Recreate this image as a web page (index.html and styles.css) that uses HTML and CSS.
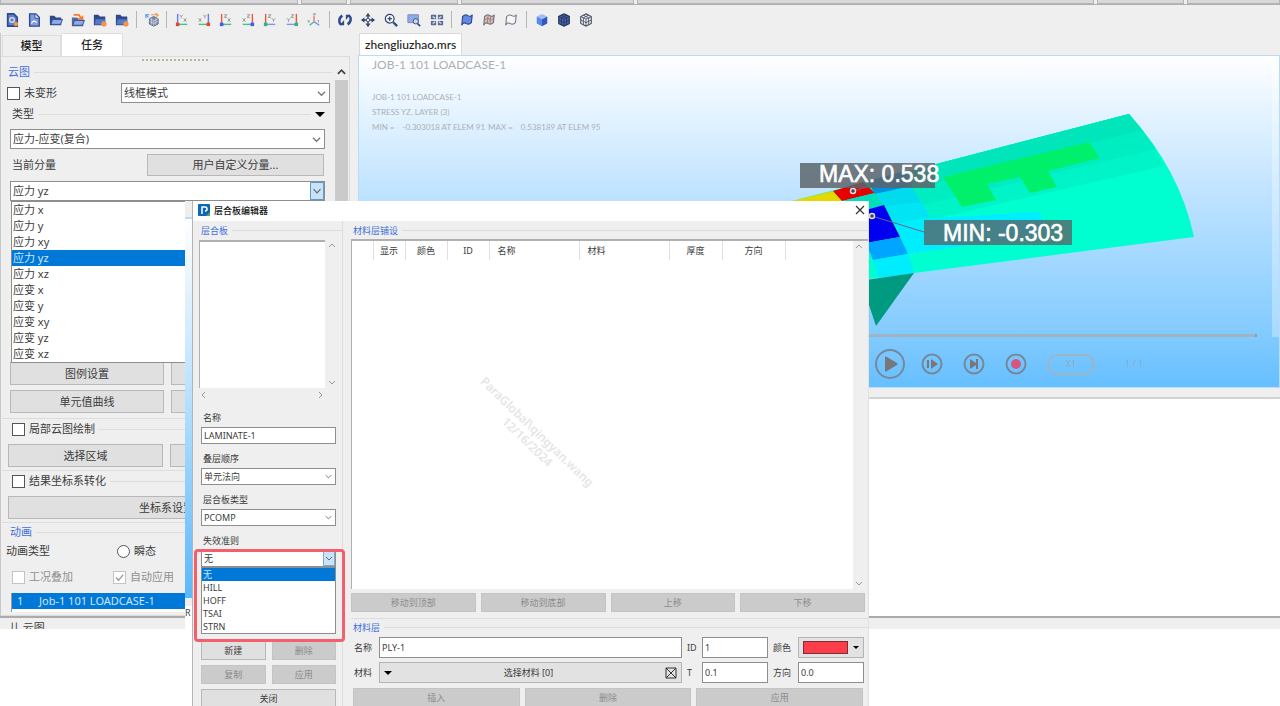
FILE: index.html
```html
<!DOCTYPE html>
<html lang="zh-CN">
<head>
<meta charset="utf-8">
<title>层合板编辑器</title>
<link rel="stylesheet" href="styles.css">
</head>
<body>
<svg class="defs" aria-hidden="true">
  <symbol id="i-doc" viewBox="0 0 16 16"><path d="M3 1h7l4 4v10H3z" fill="#7f9ce6" stroke="#2d4a8c" stroke-width="1.6"/><path d="M9 1v5h5" fill="#dce6fb" stroke="#2d4a8c"/><path d="M5 12q3-5 6-1" stroke="#fff" fill="none" stroke-width="1.5"/></symbol>
  <symbol id="i-docnew" viewBox="0 0 16 16"><path d="M3 1h7l4 4v10H3z" fill="#5f7fc4" stroke="#2d4a8c" stroke-width="1.8"/><circle cx="8" cy="8" r="2.6" fill="none" stroke="#dfe8fb" stroke-width="1.4"/><circle cx="12.500" cy="12.500" r="2.500" fill="#f0964c"/></symbol>
  <symbol id="i-folder" viewBox="0 0 16 16"><path d="M1 3h5l2 2h6v9H1z" fill="#2d4a8c"/><path d="M4 7.500h11.500L13 13H2z" fill="#8fabec" stroke="#2d4a8c"/></symbol>
  <symbol id="i-folderup" viewBox="0 0 16 16"><path d="M1 5h5l2 1h6v9H1z" fill="#5a6a98"/><path d="M4 8.500h11.500L13 14H2z" fill="#8fabec" stroke="#2d4a8c"/><path d="M3 2h6l3 5M8 7h5V3" fill="none" stroke="#ee7f33" stroke-width="2"/></symbol>
  <symbol id="i-foldernew" viewBox="0 0 16 16"><path d="M1 2h5l2 2h6v10H1z" fill="#2d4a8c"/><path d="M3 7h11v6H2z" fill="#5879c4"/><circle cx="12.500" cy="12.500" r="3" fill="#f0964c"/></symbol>
  <symbol id="i-mesh" viewBox="0 0 16 16"><path d="M10 4l5 2.500v6L10 15l-5-2.500v-6z" fill="#7d89a8" stroke="#56617f"/><path d="M5 6.500l5 2.500 5-2.500M10 9v6M5 9.500l5 2.500 5-2.500M7.500 5.500v8M12.500 5.500v8" fill="none" stroke="#dfe3ee" stroke-width=".7"/><path d="M1 6V2h4M1 2l3 3" fill="none" stroke="#4f8ff0" stroke-width="1.200"/><path d="M7 2h7M12 0l3 2.500L13 4" fill="none" stroke="#f09a4c" stroke-width="1.300"/></symbol>
  <symbol id="i-rot" viewBox="0 0 16 16"><path d="M5 3C0 6 1 12 4 13M11 13c5-3 4-9 1-10" fill="none" stroke="#2d4a8c" stroke-width="2.800"/><path d="M2 14h5V8zM14 2H9v6z" fill="#2d4a8c"/></symbol>
  <symbol id="i-move" viewBox="0 0 16 16"><path d="M8 1v14M1 8h14" stroke="#33456f" stroke-width="1.500"/><path d="M8 0l3 4H5zM8 16l3-4H5zM0 8l4-3v6zM16 8l-4-3v6z" fill="#33456f"/><circle cx="8" cy="8" r="2" fill="#efefef" stroke="#33456f"/></symbol>
  <symbol id="i-zoom" viewBox="0 0 16 16"><circle cx="6.500" cy="6.500" r="5" fill="#f4f6fb" stroke="#33456f" stroke-width="1.400"/><path d="M4 6.500h5M6.500 4v5" stroke="#33456f" stroke-width="1.400"/><path d="M10.500 10.500L15 15" stroke="#2d4a8c" stroke-width="2.600"/></symbol>
  <symbol id="i-zoombox" viewBox="0 0 16 16"><path d="M1 2h12v9H1z" fill="#8fabec" stroke="#7685a8"/><circle cx="10" cy="9.500" r="3" fill="#c9d6f6" stroke="#33456f"/><path d="M12 12l3 3" stroke="#2d4a8c" stroke-width="2"/></symbol>
  <symbol id="i-fit" viewBox="0 0 16 16"><path d="M1 2h6v5H1zM9 2h6v5H9zM1 9h6v5H1zM9 9h6v5H9z" fill="#5b6b94"/><path d="M3 4l3 2M13 4l-3 2M3 12l3-2M13 12l-3-2" stroke="#e4e8f2" stroke-width="1.300"/></symbol>
  <symbol id="i-flag" viewBox="0 0 16 16"><path d="M3 4q3-3 6-1t5-1l-1 9q-3 3-6 1t-5 2z" fill="#6488e6" stroke="#2d4a8c" stroke-width="1.300"/></symbol>
  <symbol id="i-flagc" viewBox="0 0 16 16"><path d="M3 4q3-3 6-1t5-1l-1 9q-3 3-6 1t-5 2z" fill="#eeb79a" stroke="#6f7488" stroke-width="1.300"/><path d="M3 8q3-3 5.500-1t5-1M7 3l-1 9M10 3L9 12" stroke="#7580a6" fill="none"/></symbol>
  <symbol id="i-flago" viewBox="0 0 16 16"><path d="M3 4q3-3 6-1t5-1l-1 9q-3 3-6 1t-5 2z" fill="#f6f6f6" stroke="#70778a" stroke-width="1.200"/></symbol>
  <symbol id="i-cube" viewBox="0 0 16 16"><path d="M8 1l6 3-6 3-6-3z" fill="#a4bcf6"/><path d="M2 4l6 3v8l-6-3z" fill="#5b84ee"/><path d="M14 4L8 7v8l6-3z" fill="#3159b8"/></symbol>
  <symbol id="i-cubem" viewBox="0 0 16 16"><path d="M8 1l6 3v8l-6 3-6-3V4z" fill="#4c69b0" stroke="#26345e" stroke-width="1.400"/><path d="M2 4l6 3 6-3M8 7v8M2 8l6 3 6-3M5 2.500l6 3v8M11 2.500l-6 3v8" fill="none" stroke="#26345e"/></symbol>
  <symbol id="i-cubew" viewBox="0 0 16 16"><path d="M8 1l6 3v8l-6 3-6-3V4z" fill="#f1f1f1" stroke="#4a5268" stroke-width="1.300"/><path d="M2 4l6 3 6-3M8 7v8M2 8l6 3 6-3M5 2.500l6 3v8M11 2.500l-6 3v8" fill="none" stroke="#4a5268"/></symbol>
</svg>

<div class="app">
  <div class="dockbar"><span class="dock d1"></span><span class="dock d2"></span><span class="dock d3"></span><span class="dock d4"></span><span class="dock d5"></span><span class="dock d6"></span><span class="dock d7"></span></div>

  <div class="toolbar" role="toolbar" aria-label="工具栏">
    <div class="tools">
      <button class="tool" aria-label="新建"><svg><use href="#i-docnew"/></svg></button>
      <button class="tool" aria-label="文件"><svg><use href="#i-doc"/></svg></button>
      <button class="tool" aria-label="打开"><svg><use href="#i-folder"/></svg></button>
      <button class="tool" aria-label="导入"><svg><use href="#i-folderup"/></svg></button>
      <button class="tool" aria-label="保存"><svg><use href="#i-foldernew"/></svg></button>
      <button class="tool" aria-label="另存为"><svg><use href="#i-foldernew"/></svg></button>
    </div>
    <span class="sep"></span>
    <div class="tools"><button class="tool" aria-label="网格"><svg><use href="#i-mesh"/></svg></button></div>
    <span class="sep"></span>
    <div class="tools">
      <button class="tool" aria-label="XY"><svg viewBox="0 0 16 16"><path d="M3 13V1" stroke="#5f7df0" stroke-width="1.600"/><path d="M3 13h11" stroke="#3fc48c" stroke-width="1.600"/><path d="M1 11h4v4H1z" fill="#e8432a"/><path d="M5 2l2 2 2-2M7 4v2M10 6l3 4M13 6l-3 4" stroke="#777" fill="none" stroke-width=".8"/></svg></button>
      <button class="tool" aria-label="-XY"><svg viewBox="0 0 16 16"><path d="M13 13V1" stroke="#5f7df0" stroke-width="1.600"/><path d="M2 13h11" stroke="#3fc48c" stroke-width="1.600"/><path d="M11 11h4v4h-4z" fill="#e8432a"/><path d="M7 2l2 2 2-2M9 4v2M2 6l3 4M5 6l-3 4" stroke="#777" fill="none" stroke-width=".8"/></svg></button>
      <button class="tool" aria-label="XZ"><svg viewBox="0 0 16 16"><path d="M3 13V1" stroke="#f0563c" stroke-width="1.600"/><path d="M3 13h11" stroke="#3fc48c" stroke-width="1.600"/><path d="M1 11h4v4H1z" fill="#3f5fe0"/><path d="M6 2h3L6 5h3M10 6l3 4M13 6l-3 4" stroke="#777" fill="none" stroke-width=".8"/></svg></button>
      <button class="tool" aria-label="-XZ"><svg viewBox="0 0 16 16"><path d="M13 13V1" stroke="#f0563c" stroke-width="1.600"/><path d="M2 13h11" stroke="#3fc48c" stroke-width="1.600"/><path d="M11 11h4v4h-4z" fill="#3f5fe0"/><path d="M7 2h3L7 5h3M2 6l3 4M5 6l-3 4" stroke="#777" fill="none" stroke-width=".8"/></svg></button>
      <button class="tool" aria-label="YZ"><svg viewBox="0 0 16 16"><path d="M3 13V1" stroke="#f0563c" stroke-width="1.600"/><path d="M3 13h11" stroke="#7d96f4" stroke-width="1.600"/><path d="M1 11h4v4H1z" fill="#2eb872"/><path d="M6 2h3L6 5h3M10 6l2 2 2-2M12 8v2" stroke="#777" fill="none" stroke-width=".8"/></svg></button>
      <button class="tool" aria-label="-YZ"><svg viewBox="0 0 16 16"><path d="M13 13V1" stroke="#f0563c" stroke-width="1.600"/><path d="M2 13h11" stroke="#7d96f4" stroke-width="1.600"/><path d="M11 11h4v4h-4z" fill="#2eb872"/><path d="M7 2h3L7 5h3M2 6l2 2 2-2M4 8v2" stroke="#777" fill="none" stroke-width=".8"/></svg></button>
      <button class="tool" aria-label="轴测"><svg viewBox="0 0 16 16"><path d="M8 10V3" stroke="#f0705a" stroke-width="1.500"/><path d="M8 10l-5 4" stroke="#3fc48c" stroke-width="1.600"/><path d="M8 10l6 4" stroke="#6f8af4" stroke-width="1.600"/><path d="M7 0h3L7 2h3M1 8l2 3M3 8l-2 3M12 8l1 1 1-1M13 9v2" stroke="#888" fill="none" stroke-width=".8"/></svg></button>
    </div>
    <span class="sep wide"></span>
    <div class="tools spaced">
      <button class="tool" aria-label="旋转"><svg><use href="#i-rot"/></svg></button>
      <button class="tool" aria-label="平移"><svg><use href="#i-move"/></svg></button>
      <button class="tool" aria-label="缩放"><svg><use href="#i-zoom"/></svg></button>
      <button class="tool" aria-label="框选缩放"><svg><use href="#i-zoombox"/></svg></button>
      <button class="tool" aria-label="适应窗口"><svg><use href="#i-fit"/></svg></button>
    </div>
    <span class="sep"></span>
    <div class="tools">
      <button class="tool" aria-label="面"><svg><use href="#i-flag"/></svg></button>
      <button class="tool" aria-label="云图面"><svg><use href="#i-flagc"/></svg></button>
      <button class="tool" aria-label="轮廓"><svg><use href="#i-flago"/></svg></button>
    </div>
    <span class="sep wide"></span>
    <div class="tools">
      <button class="tool" aria-label="实体"><svg><use href="#i-cube"/></svg></button>
      <button class="tool" aria-label="实体网格"><svg><use href="#i-cubem"/></svg></button>
      <button class="tool" aria-label="线框"><svg><use href="#i-cubew"/></svg></button>
    </div>
  </div>

  <div class="main">
    <aside class="side">
      <div class="tabs" role="tablist">
        <button class="tab" role="tab">模型</button>
        <button class="tab on" role="tab" aria-selected="true">任务</button>
      </div>
      <div class="panel">
        <div class="grip"></div>
        <div class="scroller">
          <div class="form">
            <h2 class="head blue">云图</h2>
            <div class="row first">
              <label class="tick"><input type="checkbox"><span>未变形</span></label>
              <select class="ctl grow" aria-label="显示模式"><option>线框模式</option></select>
            </div>
            <div class="inner">
              <h3 class="head type">类型<i class="tri"></i></h3>
              <select class="ctl result" aria-label="类型"><option>应力-应变(复合)</option></select>
              <div class="row comp"><span>当前分量</span><button class="btn grow">用户自定义分量...</button></div>
              <div class="combo">
                <select class="ctl hot" aria-label="当前分量"><option>应力 yz</option></select>
                <ul class="list">
                  <li>应力 x</li><li>应力 y</li><li>应力 xy</li><li class="sel">应力 yz</li><li>应力 xz</li>
                  <li>应变 x</li><li>应变 y</li><li>应变 xy</li><li>应变 yz</li><li>应变 xz</li>
                </ul>
              </div>
              <div class="pair legendrow"><button class="btn">图例设置</button><button class="btn" aria-label="显示设置"></button></div>
              <div class="pair"><button class="btn">单元值曲线</button><button class="btn" aria-label="节点值曲线"></button></div>
            </div>
            <div class="box">
              <label class="head"><input type="checkbox">局部云图绘制</label>
              <div class="pair"><button class="btn">选择区域</button><button class="btn" aria-label="清除区域"></button></div>
            </div>
            <div class="box">
              <label class="head"><input type="checkbox">结果坐标系转化</label>
              <div class="pair"><button class="btn">坐标系设置</button></div>
            </div>
            <div class="box anim">
              <h2 class="head blue">动画</h2>
              <div class="row kind"><span>动画类型</span><label class="tick"><input type="radio" name="kind"><span>瞬态</span></label></div>
              <div class="row off"><label class="tick"><input type="checkbox" disabled><span>工况叠加</span></label><label class="tick"><input type="checkbox" class="checked" disabled checked><span>自动应用</span></label></div>
              <div class="jobs"><div class="job"><span>1</span><span>Job-1 101 LOADCASE-1</span></div></div>
            </div>
          </div>
          <div class="sbar"><svg viewBox="0 0 10 10"><path d="M1 7l4-4 4 4" fill="none" stroke="#444" stroke-width="2"/></svg><span class="thumb"></span></div>
        </div>
      </div>
    </aside>

    <section class="work">
      <div class="filetabs"><button class="filetab">zhengliuzhao.mrs</button></div>
      <div class="view">
        <svg class="model" viewBox="359 56 922 331" aria-label="应力云图">
          <path d="M788 202L1129 114Q1180 170 1194 237L914 273L860 280V202z" fill="#00ffd0"/>
          <path d="M875 180L1129 114Q1148 136 1164 166L925 221z" fill="#00f4c8"/>
          <path d="M875 180L1129 114Q1143 130 1156 149L922 205z" fill="#00edc2"/>
          <path d="M868 182L1129 114L1142 130L912 189z" fill="#00e5ba"/>
          <path d="M788 202L833 191L843 202z" fill="#e4d800"/>
          <path d="M833 191L863 182L875 193L842 201z" fill="#e60000"/>
          <path d="M842 201L875 193L884 205L868 211z" fill="#00dfb9"/>
          <path d="M867 181L905 171L912 187L875 194z" fill="#0090e0"/>
          <path d="M875 194L911 186L922 205L886 208z" fill="#00dbee"/>
          <path d="M884 206L922 202L930 217L895 224z" fill="#00e4f4"/>
          <path d="M895 224L929 218L1040 212L1046 234L908 254z" fill="#00ecff"/>
          <path d="M866 210L884 205L900 237L866 243z" fill="#0000f0"/>
          <path d="M866 243L900 237L908 254L873 260z" fill="#00a5ff"/>
          <path d="M873 260L908 254L914 273L879 278z" fill="#00ecff"/>
          <path d="M943 177L1089 142L1100 158L1048 171L1057 187L1030 193L1020 177L987 184L996 200L962 207z" fill="#00f06c"/>
          <path d="M866 280L914 273L876 326L866 296z" fill="#009a80"/>
          <path d="M800 163h135v25H800z" fill="#5c646a" fill-opacity=".84"/>
          <path d="M853 191l14-4M872 216l52 16" stroke="#668" stroke-width="1"/>
          <path d="M924 220h148v25H924z" fill="#57656a" fill-opacity=".8"/>
          <circle cx="853" cy="191" r="2.500" fill="#444" stroke="#ddd" stroke-width="1.500"/>
          <circle cx="872" cy="216" r="2.500" fill="#444" stroke="#ddd" stroke-width="1.500"/>
          <text class="mark" x="819" y="182">MAX: 0.538</text>
          <text class="mark" x="943" y="241">MIN: -0.303</text>
        </svg>
        <div class="notes">
          <p class="big">JOB-1 101 LOADCASE-1</p>
          <p>JOB-1 101 LOADCASE-1</p>
          <p>STRESS YZ, LAYER (3)</p>
          <p><span>MIN =</span><span class="v1">-0.303018 AT ELEM 91</span><span class="v2">MAX =</span><span class="v1">0.538189 AT ELEM 95</span></p>
        </div>
        <div class="track"></div>
        <div class="player">
          <button class="round large" aria-label="播放"><svg viewBox="0 0 30 30"><circle cx="15" cy="15" r="14" fill="none" stroke="#75899a" stroke-width="2"/><path d="M10 8q0-1 2 0l10 6q1 1 0 2l-10 6q-2 1-2 0z" fill="#75787c"/></svg></button>
          <button class="round" aria-label="下一帧"><svg viewBox="0 0 22 22"><circle cx="11" cy="11" r="9.500" fill="none" stroke="#75899a" stroke-width="2"/><path d="M6 7h2v8H6zM10 6l7 5-7 5z" fill="#75787c"/></svg></button>
          <button class="round" aria-label="末帧"><svg viewBox="0 0 22 22"><circle cx="11" cy="11" r="9.500" fill="none" stroke="#75899a" stroke-width="2"/><path d="M7 6l6 4V6h2v10h-2v-4l-6 4z" fill="#75787c"/></svg></button>
          <button class="round" aria-label="录制"><svg viewBox="0 0 22 22"><circle cx="11" cy="11" r="9.500" fill="none" stroke="#75899a" stroke-width="2"/><circle cx="11" cy="11" r="5" fill="#d4587e"/></svg></button>
          <button class="speed">X1</button>
          <span class="frame">1 / 1</span>
        </div>
        <div class="viewscroll"></div>
      </div>
      <div class="below"></div>
    </section>
  </div>
  <footer class="status">儿 云图</footer>
</div>

<div class="layer">
  <div class="behind"><span class="sky"></span><span class="rest">R</span></div>
  <div class="dialog" role="dialog" aria-label="层合板编辑器">
    <header class="titlebar">
      <svg class="logo" viewBox="0 0 12 12"><rect width="12" height="12" rx="1" fill="#0d68b4"/><path d="M4 10V3h3q2 0 2 2t-2 2" fill="none" stroke="#fff" stroke-width="1.500"/><path d="M8 12l4-4v4z" fill="#4fae4a"/></svg>
      <h1>层合板编辑器</h1>
      <button class="close" aria-label="关闭窗口"><svg viewBox="0 0 10 10"><path d="M1 1l8 8M9 1L1 9" stroke="#333" stroke-width="1.200"/></svg></button>
    </header>
    <div class="content">
      <section class="left">
        <h2 class="head blue">层合板</h2>
        <div class="leftin">
          <div class="names">
            <div class="namelist"></div>
            <div class="vbar"><svg viewBox="0 0 8 8"><path d="M1 6l3-3 3 3"/></svg><svg viewBox="0 0 8 8"><path d="M1 2l3 3 3-3"/></svg></div>
            <div class="hbar"><svg viewBox="0 0 8 8"><path d="M6 1L3 4l3 3"/></svg><svg viewBox="0 0 8 8"><path d="M2 1l3 3-3 3"/></svg></div>
          </div>
          <label class="field"><span>名称</span><input class="ctl" value="LAMINATE-1"></label>
          <label class="field"><span>叠层顺序</span><select class="ctl"><option>单元法向</option></select></label>
          <label class="field"><span>层合板类型</span><select class="ctl"><option>PCOMP</option></select></label>
          <div class="combo">
            <label class="field"><span>失效准则</span><select class="ctl hot"><option>无</option></select></label>
            <ul class="list"><li class="sel">无</li><li>HILL</li><li>HOFF</li><li>TSAI</li><li>STRN</li></ul>
            <div class="callout"></div>
          </div>
          <div class="acts">
            <button class="btn">新建</button><button class="btn" disabled>删除</button>
            <button class="btn" disabled>复制</button><button class="btn" disabled>应用</button>
            <button class="btn full">关闭</button>
          </div>
        </div>
      </section>
      <section class="right">
        <h2 class="head blue">材料层铺设</h2>
        <div class="plies">
          <div class="sheet">
            <table>
              <colgroup><col class="c0"><col class="c1"><col class="c2"><col class="c2"><col class="c4"><col class="c4"><col class="c6"><col class="c7"><col></colgroup>
              <thead><tr><th></th><th>显示</th><th>颜色</th><th>ID</th><th class="l">名称</th><th class="l">材料</th><th>厚度</th><th>方向</th><th class="end"></th></tr></thead>
            </table>
            <div class="water"><span>ParaGlobal\qingyan.wang</span><span>12/16/2024</span></div>
          </div>
          <div class="vbar"><svg viewBox="0 0 8 8"><path d="M1 6l3-3 3 3"/></svg><svg viewBox="0 0 8 8"><path d="M1 2l3 3 3-3"/></svg></div>
        </div>
        <div class="moves"><button class="btn" disabled>移动到顶部</button><button class="btn" disabled>移动到底部</button><button class="btn" disabled>上移</button><button class="btn" disabled>下移</button></div>
        <div class="plybox">
          <h2 class="head blue">材料层</h2>
          <div class="plyform">
            <label for="pn">名称</label><input id="pn" class="ctl" value="PLY-1">
            <label for="pid">ID</label><input id="pid" class="ctl" value="1">
            <label for="pc">颜色</label><button id="pc" class="color"><span class="swatch"></span><i class="tri"></i></button>
            <label for="pm">材料</label><button id="pm" class="pick"><i class="tri"></i><span>选择材料 [0]</span><svg viewBox="0 0 12 12"><path d="M1 1h10v10H1zM1 1l10 10M11 1L1 11" fill="none" stroke="#333"/></svg></button>
            <label for="pt">T</label><input id="pt" class="ctl" value="0.1">
            <label for="pd">方向</label><input id="pd" class="ctl" value="0.0">
          </div>
          <div class="moves last"><button class="btn" disabled>插入</button><button class="btn" disabled>删除</button><button class="btn" disabled>应用</button></div>
        </div>
      </section>
    </div>
  </div>
</div>
</body>
</html>
```
FILE: styles.css
```css
* { box-sizing: border-box; }
body { margin: 0; min-height: 100vh; position: relative; overflow: hidden; background: #fff; color: #3c3c3c;
  font: 11px/16px "Noto Sans", "Noto Sans CJK SC", sans-serif; }
h1, h2, h3, p, ul { margin: 0; padding: 0; font-size: inherit; font-weight: 400; list-style: none; }
button, input, select { font: inherit; color: inherit; margin: 0; padding: 0; border-radius: 0; }
button { border: 0; background: none; }
.defs { display: none; }

.app { background: #efefef; display: flex; flex-direction: column; }
.dockbar { display: flex; gap: 3px; height: 5px; background: #efefef; border-bottom: 1px solid #b0b0b0; }
.dock { background: #d8d8d8; border: solid #b4b4b4; border-width: 0 1px 1px; }
.d1 { width: 298px; } .d2 { width: 46px; } .d3 { width: 108px; } .d4 { width: 173px; }
.d5 { width: 457px; } .d6 { width: 87px; } .d7 { flex: 1; }

.toolbar { display: flex; align-items: center; height: 28px; padding: 1px 0 0 1px; }
.tools { display: flex; }
.spaced { gap: 1px; }
.tool { width: 22px; height: 22px; display: flex; align-items: center; justify-content: center; }
.tool svg { width: 14px; height: 14px; }
.sep { width: 1px; height: 17px; margin: 0 4px 0 3px; background: #b5b5b5; }
.sep.wide { margin: 0 4px; }

.main { display: flex; gap: 8px; }
.side { width: 350px; border-left: 1px solid #c8c8c8; display: flex; flex-direction: column; }
.tabs { display: flex; align-items: flex-end; height: 23px; padding-left: 1px; }
.tab { width: 59px; height: 21px; border: 1px solid #dedede; border-bottom: 0; color: #222; font-weight: 500; }
.tab.on { width: 62px; height: 23px; background: #fff; }
.panel { border: 1px solid #dcdcdc; border-left: 0; }
.grip { width: 66px; height: 2px; margin: 2px auto 3px 141px;
  background: repeating-linear-gradient(90deg, #b5b5a0 0 2px, transparent 2px 4px); }
.scroller { display: flex; }
.form { flex: 1; padding: 0 2px 3px 1px; min-width: 0; }
.sbar { width: 15px; display: flex; flex-direction: column; align-items: center; }
.sbar svg { width: 9px; height: 16px; flex: none; }
.thumb { flex: 1; width: 13px; background: #cacaca; }

.head { display: flex; align-items: center; gap: 4px; height: 16px; padding-left: 6px; }
.head::after { content: ""; flex: 1; height: 1px; background: #dcdcdc; }
.blue { color: #3f6fd8; }
.row { display: flex; align-items: center; }
.grow { flex: 1; }
.first { margin: 3px 2px 3px 5px; }
.first .tick { width: 114px; }
.tick { display: flex; align-items: center; gap: 4px; }
input[type="checkbox"], input[type="radio"] { appearance: none; width: 13px; height: 13px; border: 1px solid #555; background: #fff; flex: none; }
input[type="radio"] { border-radius: 50%; }
input:disabled { border-color: #c4c4c4; }
input.checked { background: #fff url("data:image/svg+xml,%3Csvg xmlns='http://www.w3.org/2000/svg' viewBox='0 0 12 12'%3E%3Cpath d='M2 6l3 3 5-6' fill='none' stroke='%23999' stroke-width='1.3'/%3E%3C/svg%3E"); }
.ctl { display: block; width: 100%; min-width: 0; height: 20px; padding: 0 2px; border: 1px solid #8e8e8e; background: #fff; }
select.ctl { appearance: none; background: #fff url("data:image/svg+xml,%3Csvg xmlns='http://www.w3.org/2000/svg' viewBox='0 0 10 10'%3E%3Cpath d='M1 3l4 4 4-4' fill='none' stroke='%23777' stroke-width='1.4'/%3E%3C/svg%3E") no-repeat right 3px center / 9px 9px; }
select.hot { background-image: url("data:image/svg+xml,%3Csvg xmlns='http://www.w3.org/2000/svg' viewBox='0 0 16 20'%3E%3Cpath d='M.5 .5h15v19H.5z' fill='%23c8e2f8' stroke='%234a88c0'/%3E%3Cpath d='M4 8l4 4 4-4' fill='none' stroke='%23666' stroke-width='1.3'/%3E%3C/svg%3E"); background-position: right center; background-size: auto 100%; }
.btn { height: 23px; border: 1px solid #b8b8b8; background: #e0e0e0; white-space: nowrap; overflow: hidden; }
.btn:disabled { background: #cbcbcb; border-color: #c4c4c4; color: #8c8c8c; }
.tri { border: 5px solid transparent; border-top-color: #000; border-bottom: 0; }
.inner { padding: 0 7px 5px 8px; border-bottom: 1px solid #dcdcdc; }
.type { padding-left: 2px; margin-bottom: 7px; gap: 4px; }
.type::after { order: 1; }
.type .tri { order: 2; }
.comp { height: 22px; margin: 5px 1px 5px 2px; }
.comp span { width: 135px; }
.comp .btn { height: 22px; }
.combo { position: relative; }
.list { position: absolute; left: 1px; top: 20px; width: 200px; background: #fff; border: 1px solid #8e8e8e; z-index: 1; }
.list li { padding-left: 1px; }
.list .sel { background: #0078d7; color: #cfe6fa; }
.pair { display: flex; gap: 7px; margin-top: 5px; }
.pair .btn { flex: 1; }
.pair.legendrow { margin-top: 161px; }
.box { padding: 2px 7px 3px 6px; border-bottom: 1px solid #dcdcdc; }
.box .head { padding-left: 4px; }
.box .pair { margin-top: 7px; }
.box.anim { padding: 1px 0 0; border: 0; }
.anim .head { padding-left: 8px; }
.kind { margin: 3px 4px 10px; }
.kind > span { width: 111px; }
.off { color: #909090; padding-left: 10px; }
.off .tick { width: 101px; }
.jobs { margin: 8px 0 0 9px; height: 19px; background: #fff; border: 1px solid #999; border-width: 0 0 0 1px; }
.job { display: flex; background: #0078d7; color: #cfe6fa; padding-left: 5px; }
.job span:first-child { width: 22px; }
.status { height: 13px; overflow: hidden; border-top: 2px solid #ababab; padding: 2px 0 0 9px; }

.work { flex: 1; min-width: 0; display: flex; flex-direction: column; }
.filetab { display: block; height: 22px; padding: 0 5px; background: #fff; border: 1px solid #dadada; border-bottom: 0; color: #222;
  font: 12px/20px Lato, "Noto Sans", sans-serif; font-weight: 500; }
.filetabs { padding-left: 1px; }
.view { position: relative; min-height: 333px; display: flex; flex-direction: column; overflow: hidden;
  border: 1px solid #b8dcfa; background: linear-gradient(#fff 0, #e6f4ff 16%, #bde2ff 43%, #82cbff 84%, #66bfff 100%); }
.model { position: absolute; left: 0; top: 0; width: 922px; height: 331px; }
.mark { font: 23px "Liberation Sans", sans-serif; fill: #fff; stroke: #fff; stroke-width: .6px; }
.notes { position: relative; padding: 1px 13px; color: #acb0b3; font: 8px/15px Lato, "Noto Sans", sans-serif; flex: 1; }
.notes .big { font-size: 12px; line-height: 16px; margin-bottom: 17px; }
.notes p { display: flex; }
.v1 { padding-left: 8px; }
.v2 { padding-left: 3px; }
.track { position: relative; height: 3px; margin: 0 22px 12px 0; background: #9fb4c2; border-right: 2px solid #8f9ca6; }
.player { position: relative; display: flex; align-items: center; padding: 0 0 8px 516px; height: 38px; }
.round { width: 22px; height: 22px; margin-right: 20px; }
.round svg { display: block; width: 100%; height: 100%; }
.round.large { width: 30px; height: 30px; margin-right: 16px; }
.speed { width: 48px; height: 21px; border: 2px solid #9fb4c2; border-radius: 11px; color: #8fabbd; font-size: 9px; line-height: 16px; }
.frame { margin-left: 30px; color: #8fabbd; font-size: 9px; }
.viewscroll { position: absolute; right: 0; top: 0; width: 7px; height: 281px; background: rgba(255, 255, 255, .3); }
.below { flex: 1; margin-top: 9px; background: #fff; border-top: 2px solid #d2d2d2; }

.layer { position: absolute; left: 185px; top: 201px; bottom: 0; width: 684px; display: flex; overflow: hidden; z-index: 5;
  font-size: 9px; line-height: 13px; }
.behind { width: 7px; display: flex; flex-direction: column; background: #efefef; padding-top: 16px; overflow: hidden; }
.sky { height: 381px; background: linear-gradient(#fff, #bfe3ff 43%, #5ab8fb); border-top: 2px solid #b8dcfa; }
.rest { flex: 1; margin-top: 8px; background: #fff; }
.dialog { flex: 1; min-width: 0; background: #efefef; border-left: 1px solid #b4b4b4; border-right: 1px solid #e2e2e2; }
.titlebar { display: flex; align-items: center; gap: 4px; height: 20px; padding: 0 3px 2px 5px; background: #fff; color: #111; }
.titlebar h1 { flex: 1; font-weight: 500; }
.logo { width: 12px; height: 12px; }
.close { width: 10px; height: 10px; }
.close svg { display: block; }
.content { display: flex; gap: 8px; }
.left { width: 150px; padding-top: 1px; border-right: 1px solid #dcdcdc; }
.right { flex: 1; min-width: 0; padding-top: 1px; }
.left .head { padding-left: 8px; }
.right .head { padding-left: 2px; }
.leftin { padding: 2px 6px 0 8px; }
.names { display: grid; grid-template-columns: 1fr 13px; margin: 0 -2px 7px; }
.namelist { height: 148px; background: #fff; border: 1px solid #b0b0b0; border-width: 2px 0 0 1px; }
.vbar { display: flex; flex-direction: column; justify-content: space-between; align-items: center; padding: 1px 0; }
.hbar { display: flex; justify-content: space-between; height: 14px; align-items: center; }
.vbar svg, .hbar svg { width: 8px; height: 8px; fill: none; stroke: #999; }
.field { display: block; line-height: 16px; margin-bottom: 6px; padding-top: 1px; }
.field span { display: block; padding: 0 0 1px 2px; }
.layer .ctl { height: 17px; }
.field select.ctl { background-size: 7px 7px; }
.field select.hot { background-size: auto 100%; }
.layer .combo .list { left: 0; right: 0; top: 35px; width: auto; }
.layer .combo .list li { line-height: 13px; }
.callout { position: absolute; left: -7px; right: -9px; top: 17px; height: 93px; border: 3px solid #f3606c; border-radius: 4px; z-index: 2; }
.layer .btn { height: 19px; }
.acts { display: grid; grid-template-columns: 1fr 1fr; gap: 5px 6px; margin-top: 66px; padding-top: 8px; }
.acts .full { grid-column: 1 / 3; }
.plies { display: flex; margin-top: 1px; border-top: 2px solid #b0b0b0; }
.sheet { position: relative; flex: 1; height: 348px; background: #fff; border-left: 1px solid #b0b0b0; overflow: hidden; }
.plies .vbar { width: 15px; padding-right: 4px; }
table { width: 100%; table-layout: fixed; border-collapse: collapse; }
th { height: 19px; padding: 0; font-weight: 400; border-right: 1px solid #e0e0e0; }
th.l { text-align: left; padding-left: 8px; }
th.end { border: 0; }
.c0 { width: 21px; } .c1 { width: 32px; } .c2 { width: 42px; } .c4 { width: 90px; } .c6 { width: 53px; } .c7 { width: 63px; }
.water { position: absolute; left: 100px; top: 182px; width: 160px; display: flex; flex-direction: column; align-items: center;
  font-size: 12px; line-height: 14px; font-weight: 600; color: #e6e6e6; transform: rotate(44deg); }
.moves { display: grid; grid-auto-flow: column; grid-auto-columns: 1fr; gap: 5px; padding: 4px 3px 0 0; }
.plybox { margin-top: 6px; border-top: 1px solid #dcdcdc; }
.plyform { display: grid; grid-template-columns: 20px 1fr 10px 66px 20px 66px; gap: 4px 5px; align-items: center; padding: 2px 4px 0 3px; margin-bottom: 5px; }
.plyform .ctl, .color, .pick { height: 21px; }
.color, .pick { display: flex; align-items: center; background: #e2e2e2; border: 1px solid #b4b4b4; padding: 0 4px; gap: 5px; }
.swatch { flex: 1; height: 13px; background: #fc3e4b; border: 1px solid #77303a; }
.color .tri { border-width: 3px 3px 0; }
.pick .tri { border-width: 4px 4px 0; }
.pick span { flex: 1; }
.pick svg { width: 12px; height: 12px; }
.moves.last { padding: 0 5px 0 2px; }
```
